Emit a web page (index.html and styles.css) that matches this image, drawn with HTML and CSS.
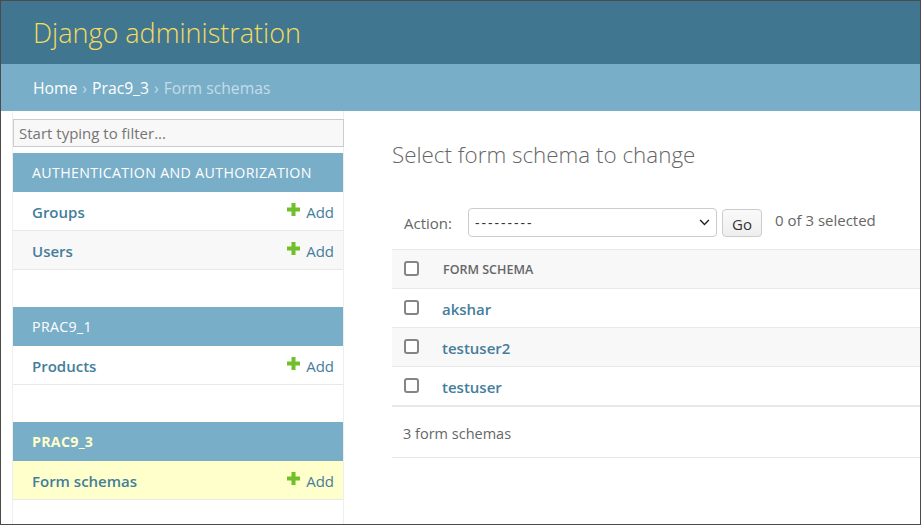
FILE: index.html
```html
<!DOCTYPE html>
<html lang="en">
<head>
<meta charset="utf-8">
<title>Select form schema to change | Django site admin</title>
<link rel="stylesheet" href="styles.css">
</head>
<body>
<div class="frame">
  <header class="header">
    <h1 class="brand">Django administration</h1>
  </header>
  <nav class="breadcrumbs">
    <a href="#">Home</a><span class="sep">›</span><a href="#">Prac9_3</a><span class="sep">›</span><span class="current">Form schemas</span>
  </nav>
  <div class="main">
    <nav class="sidebar">
      <input class="filter" type="search" placeholder="Start typing to filter...">
      <div class="module">
        <div class="caption">Authentication and Authorization</div>
        <div class="row"><a class="model" href="#">Groups</a><a class="add" href="#"><svg class="plus" viewBox="0 0 13 13" width="13" height="13"><path d="M4.5 0h4v4.5H13v4H8.5V13h-4V8.5H0v-4h4.5z" fill="#70bf2b"/></svg>Add</a></div>
        <div class="row alt"><a class="model" href="#">Users</a><a class="add" href="#"><svg class="plus" viewBox="0 0 13 13" width="13" height="13"><path d="M4.5 0h4v4.5H13v4H8.5V13h-4V8.5H0v-4h4.5z" fill="#70bf2b"/></svg>Add</a></div>
      </div>
      <div class="module">
        <div class="caption">Prac9_1</div>
        <div class="row"><a class="model" href="#">Products</a><a class="add" href="#"><svg class="plus" viewBox="0 0 13 13" width="13" height="13"><path d="M4.5 0h4v4.5H13v4H8.5V13h-4V8.5H0v-4h4.5z" fill="#70bf2b"/></svg>Add</a></div>
      </div>
      <div class="module">
        <div class="caption current-app">Prac9_3</div>
        <div class="row current-model"><a class="model" href="#">Form schemas</a><a class="add" href="#"><svg class="plus" viewBox="0 0 13 13" width="13" height="13"><path d="M4.5 0h4v4.5H13v4H8.5V13h-4V8.5H0v-4h4.5z" fill="#70bf2b"/></svg>Add</a></div>
      </div>
    </nav>
    <section class="content">
      <h1 class="title">Select form schema to change</h1>
      <div class="actions">
        <label class="action-label">Action:</label>
        <div class="select"><span>---------</span><svg class="chev" viewBox="0 0 12 8" width="11" height="7"><path d="M1 1.2l5 5 5-5" fill="none" stroke="#222" stroke-width="1.6"/></svg></div>
        <button class="go" type="button">Go</button>
        <span class="counter">0 of 3 selected</span>
      </div>
      <div class="table">
        <div class="thead"><span class="check"></span><span class="colname">Form schema</span></div>
        <div class="trow"><span class="check"></span><a class="obj" href="#">akshar</a></div>
        <div class="trow alt"><span class="check"></span><a class="obj" href="#">testuser2</a></div>
        <div class="trow last"><span class="check"></span><a class="obj" href="#">testuser</a></div>
      </div>
      <p class="paginator">3 form schemas</p>
    </section>
  </div>
</div>
</body>
</html>
```
FILE: styles.css
```css
* { box-sizing: border-box; }
html, body { margin: 0; padding: 0; background: #fff; }
body { font-family: "Open Sans", "Noto Sans", sans-serif; color: #333; }
a { text-decoration: none; }

.frame {
  width: 921px;
  height: 525px;
  border: 1px solid #4b4b4b;
  overflow: hidden;
  display: flex;
  flex-direction: column;
}

.header {
  height: 63px;
  flex: none;
  background: #417690;
  display: flex;
  align-items: center;
  padding-left: 32px;
}
.brand {
  margin: 0;
  font-weight: 300;
  font-size: 27px;
  color: #f5dd5d;
}

.breadcrumbs {
  height: 47px;
  flex: none;
  background: #79aec8;
  display: flex;
  align-items: center;
  padding: 1px 0 0 32px;
  font-size: 15.7px;
  color: #c4dce8;
}
.breadcrumbs a { color: #fff; }
.breadcrumbs .sep { margin: 0 5px; }

.main {
  flex: 1;
  display: flex;
  min-height: 0;
}

.sidebar {
  flex: none;
  width: 332px;
  margin-left: 11px;
  border-left: 1px solid #eee;
  border-right: 1px solid #eee;
  padding-top: 8px;
}
.filter {
  display: block;
  width: 331px;
  height: 28px;
  margin: 0 0 6px;
  padding: 0 5px;
  border: 1px solid #ccc;
  background: #f8f8f8;
  font-family: inherit;
  font-size: 15px;
  color: #333;
  outline: none;
}
.filter::placeholder { color: #757575; }

.module { margin-bottom: 37px; }
.caption {
  height: 39px;
  display: flex;
  align-items: center;
  padding-left: 19px;
  background: #79aec8;
  color: #fff;
  font-size: 14.2px;
  letter-spacing: 0.35px;
  text-transform: uppercase;
}
.caption.current-app { font-weight: 700; color: #ffc; letter-spacing: 0.3px; }

.row {
  height: 39px;
  display: flex;
  align-items: center;
  justify-content: space-between;
  padding: 2px 9px 0 19px;
  border-bottom: 1px solid #e8e8e8;
}
.row.alt { background: #f8f8f8; }
.row.current-model { background: #ffc; }
.model { color: #447e9b; font-weight: 600; font-size: 15px; }
.add { color: #447e9b; font-size: 15px; display: flex; align-items: center; }
.plus { margin-right: 6px; position: relative; top: -3px; }

.content {
  flex: 1;
  padding: 25px 0 0 48px;
  min-width: 0;
}
.title {
  margin: 0 0 22px;
  line-height: 38px;
  font-size: 22.4px;
  font-weight: 300;
  color: #666;
}

.actions {
  display: flex;
  align-items: center;
  padding: 12px 12px;
  color: #666;
  font-size: 15px;
}
.action-label { margin-right: 16px; }
.select {
  width: 249px;
  height: 29px;
  border: 1px solid #ccc;
  border-radius: 4px;
  display: flex;
  align-items: center;
  justify-content: space-between;
  padding: 0 6px 0 6px;
  color: #333;
  font-size: 14px;
  letter-spacing: 2px;
}
.go {
  margin-left: 5px;
  width: 40px;
  height: 28px;
  border: 1px solid #ccc;
  border-radius: 4px;
  background: linear-gradient(#fafafa, #eee);
  font-family: inherit;
  font-size: 15px;
  color: #333;
  padding: 2px 0 0;
}
.counter { margin-left: 13px; position: relative; top: -3px; }

.table { border-top: 1px solid #e8e8e8; }
.thead, .trow {
  height: 39px;
  display: flex;
  align-items: center;
  padding: 1px 0 0 12px;
  border-bottom: 1px solid #e8e8e8;
}
.thead { background: #f8f8f8; }
.trow.alt { background: #f8f8f8; }
.check {
  width: 15px;
  height: 15px;
  border: 2px solid #858585;
  border-radius: 3px;
  background: #fff;
  flex: none;
  position: relative;
  top: -1px;
}
.colname {
  margin-left: 24px;
  text-transform: uppercase;
  font-size: 12.5px;
  font-weight: 600;
  color: #666;
}
.obj {
  margin-left: 23px;
  color: #447e9b;
  font-weight: 600;
  font-size: 15px;
}
.paginator {
  margin: 0;
  height: 52px;
  display: flex;
  align-items: center;
  padding: 3px 0 0 11px;
  border-top: 1px solid #e8e8e8;
  border-bottom: 1px solid #e8e8e8;
  font-size: 14.5px;
  color: #666;
}
```
